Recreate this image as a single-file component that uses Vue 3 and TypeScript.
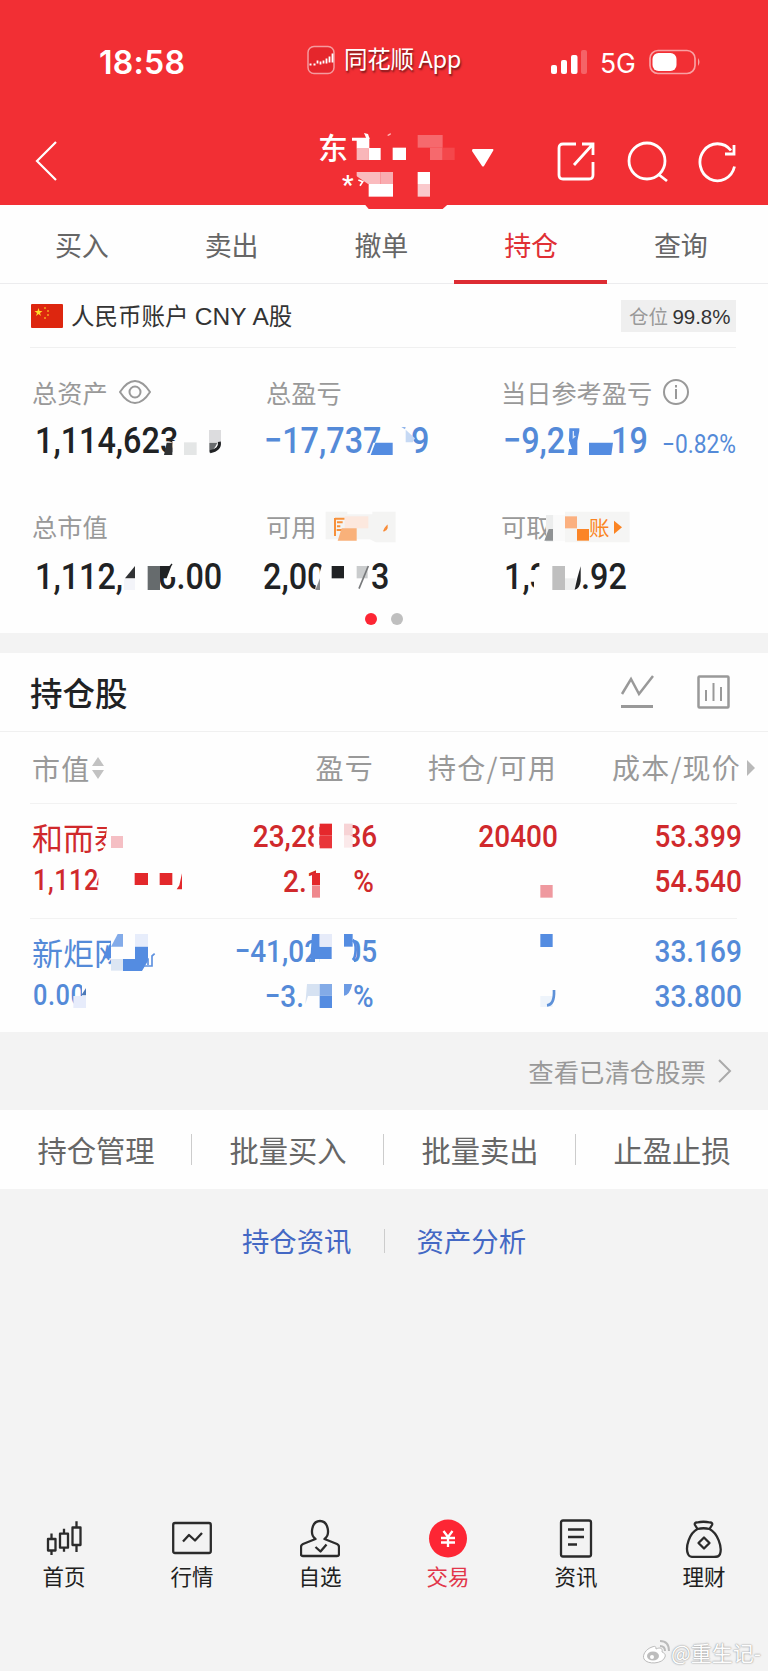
<script setup lang="ts">
interface Part { t: string; gap?: number }
interface Patch { p: string; c: string; w?: number }
interface Layer { x: number; y: number; items: Patch[] }

const tabs = ['买入', '卖出', '撤单', '持仓', '查询']
const actions = ['持仓管理', '批量买入', '批量卖出', '止盈止损']

const holdings: { tone: string; name: string; value: string; profit: Part[]; rate: Part[]; qty: string; cost: string; price: string }[] = [
  { tone: 'up', name: '和而泰', value: '1,112', profit: [{ t: '23,28' }, { t: '36', gap: 26 }], rate: [{ t: '2.1' }, { t: '%', gap: 35 }], qty: '20400', cost: '53.399', price: '54.540' },
  { tone: 'down', name: '新炬网', value: '0.00', profit: [{ t: '−41,02' }, { t: '05', gap: 29 }], rate: [{ t: '−3.' }, { t: '%', gap: 56 }], qty: '', cost: '33.169', price: '33.800' }
]

const bg = '#fefefe'
const red = '#e3282b'
const blue = '#548ce1'
const box = (x: number, y: number, w: number, h: number, c: string): Patch => ({ p: `M${x} ${y}h${w}v${h}h${-w}z`, c })
const shape = (p: string, c: string): Patch => ({ p, c })
const line = (p: string, c: string, w: number): Patch => ({ p, c, w })

// Mosaic tiles over private values; each layer is drawn on a grid of 1/3 px.
const layers: Layer[] = [
  { x: 290, y: 115, items: [
    shape('M186 68h52v32h-38V77h-14z', '#fff'), shape('M222 54l12 3 5 14-8 4z', '#fff'), shape('M292 60l10-6v5l-8 4z', '#fbb'),
    box(200, 99, 36, 36, '#f9b6b9'), box(236, 99, 36, 36, '#fff'), box(308, 98, 40, 37, '#fff'),
    box(383, 60, 75, 38, '#f6696d'), box(420, 98, 38, 37, '#f6696d'), box(458, 98, 36, 37, '#f4474b'),
    box(200, 171, 72, 36, '#fabbbe'), shape('M198 182v25h36z', '#f22f34'), box(272, 171, 37, 36, '#f9acb0'), box(236, 207, 73, 38, '#fff'),
    line('M205 195l13 5-8 12', '#fff', 5),
    box(383, 171, 37, 36, '#fff'), box(383, 207, 37, 38, '#fac9cc'),
    shape('M224 268h250l-16 14H236z', '#f22f34')
  ] },
  { x: 0, y: 365, items: [
    box(517, 228, 34, 50, bg), shape('M500 233h17v37h-25z', '#303234'), box(552, 232, 38, 38, '#e4e6e6'), box(627, 195, 36, 37, '#dcdcde'),
    shape('M628 233h24q-8 20-24 30z', '#696c6e'), line('M658 230q4 25-28 30', '#202224', 9),
    shape('M1120 233h60v40h-74z', bg), shape('M1126 233h52v37h-66z', blue),
    shape('M375 640l30-37v37z', '#303234'), box(372, 642, 33, 33, '#f3f4f9'), box(443, 603, 37, 72, '#666b6d'), box(480, 590, 52, 46, bg), shape('M480 603h34l-14 37h-20z', '#202224'), line('M500 617l16-20', '#202224', 4),
    shape('M970 585h20v95h-44v-12z', bg), shape('M960 640v35h-14z', '#8a8c8e'), box(995, 603, 37, 37, '#202224'), shape('M1070 590h38l-26 85h-12z', bg), box(1070, 603, 33, 37, '#cacccd'), line('M1105 603l-28 68', '#77797b', 5),
    shape('M977 440h65v8h75v-8h70v92h-60l-18-9H977z', '#f4f4f3'), line('M1005 461h29M1005 459v54M1011 472h17M1011 484h10M1010 495h16', '#f7903a', 6), box(1034, 454, 71, 36, '#fce8de'), shape('M1025 490h45v37h-57z', '#f9b17a'), line('M1151 499q2-8 10-16v6q-2 6-9 8z', '#f98a35', 4)
  ] },
  { x: 384, y: 365, items: [
    shape('M65 194l28 26-7 12H65z', '#c6d9f4'), shape('M52 186h13l-2 7z', '#8fb4eb'),
    box(550, 185, 47, 90, bg), shape('M556 190h30v8l-6 30v42h-28l3-18h9l-9-25z', blue), line('M568 198v20l6-5', '#dbe7fa', 4), shape('M615 233h72l-5 37h-67z', blue),
    shape('M486 450h22v80h-22z', '#eceded'), shape('M494 492h13v35h-26z', '#8f9294'), box(543, 440, 194, 92, '#f5f5f4'), box(508, 450, 35, 78, '#fafafa'), box(543, 454, 36, 36, '#fbb080'), box(579, 492, 36, 35, '#fb8527'),
    shape('M690 467l24 20-24 20z', '#fb8423'),
    box(466, 590, 40, 90, bg), shape('M450 622h18v60h-22l4-20z', bg), box(505, 603, 38, 72, '#bfbfbf'), box(543, 640, 32, 35, '#eeefef'), shape('M590 604v44q-2 22-18 26l8-35z', '#202224')
  ] },
  { x: 0, y: 800, items: [
    shape('M322 70h58v90h-78l18-30-2-20z', bg), box(333, 108, 36, 36, '#f5bfc4'), shape('M295 232v24h-6z', red), box(404, 219, 40, 36, red), box(479, 219, 38, 36, red), shape('M546 220v48h-16l8-12z', red),
    box(941, 65, 17, 85, bg), box(959, 71, 37, 36, '#e5282c'), box(959, 107, 37, 38, '#e9363a'), box(1032, 71, 26, 36, '#f7d3d5'), box(1032, 107, 26, 36, '#fbe9ea'),
    box(948, 205, 40, 80, bg), box(936, 255, 40, 30, bg), box(936, 219, 24, 36, '#e3282b'), box(936, 256, 24, 37, '#ef888d'),
    box(333, 410, 75, 105, bg), shape('M333 425l-25 50h25z', blue), shape('M369 402v38h-36l20-38z', '#83abe9'), box(405, 402, 39, 38, '#e7edfb'), box(333, 477, 36, 35, '#dce6f3'), shape('M405 440h39v42l-18 31h-57v-36h36z', blue), line('M432 498h24v-30l8-7M444 475v20', '#5e91df', 5),
    box(246, 545, 20, 75, bg), shape('M244 586l14-22v22z', '#4d79b9'), box(220, 588, 38, 36, '#e7ecfb'),
    box(945, 415, 14, 75, bg), shape('M936 402h23v38h36v37h-64z', blue), box(959, 402, 37, 38, '#e6ebf9'), box(1030, 410, 32, 80, bg), box(1032, 402, 26, 38, blue), line('M1058 420q10 6 9 30t-9 30', blue, 8),
    shape('M921 552h38v36h-35l-8 25z', '#d6e2f2'), box(959, 552, 37, 35, '#83abe7'), box(959, 587, 37, 37, blue), shape('M1032 552h25q-8 34-25 35z', '#6c9be4')
  ] },
  { x: 384, y: 800, items: [
    box(469, 255, 37, 38, '#ef999f'), box(469, 402, 37, 39, blue), box(469, 588, 37, 33, '#eef4fb'), line('M510 570q2 44-21 46', '#5e91d8', 8)
  ] }
]

const nav = [
  { label: '首页', icon: ['M7.500 14.500v5.500M4 20h7.500v11.500h-7.500zM7.500 31.500v4.500', 'M20 9.700v5M16 14.700h8v14h-8zM20 28.700v4', 'M32.500 2.300v6.200M28.500 8.500h8v17.500h-8zM32.500 26v7'] },
  { label: '行情', icon: ['M3 4h34q1.800 0 1.800 2v26q0 2-1.800 2H3q-1.800 0-1.800-2v-26q0-2 1.800-2z', 'M11 22.500l6-6.500 6 5.500 7-7.500'] },
  { label: '自选', icon: ['M15.500 20c-6-4-4-18 4.500-18s10.500 14 4.500 18l12.500 5q2 1 2 3v7q0 2-2 2H3q-2 0-2-2v-7q0-2 2-3z', 'M15.500 28l5 4.500 6-7'] },
  { label: '交易', icon: [] },
  { label: '资讯', icon: ['M7 1.500h26q2 0 2 2v32q0 2-2 2H7q-2 0-2-2V3.500q0-2 2-2z', 'M12 10.500h16M12 18h16M12 25.500h9'] },
  { label: '理财', icon: ['M13.500 10l-2.500-4q-1-2.500 2-2.500 6.500-1.500 13 0 3 0 2 2.500l-2.500 4', 'M13.500 10q6-1.500 12 0c8 4 13 18 10.500 25q-1 3-6 3H10q-5 0-6-3C1 28 5.500 14 13.500 10z', 'M20 18.500l5.500 5.500-5.500 5.500-5.500-5.500z'] }
]
</script>

<template>
  <div class="screen">
    <header class="top">
      <div class="status">
        <span class="clock">18:58</span>
        <div class="source">
          <svg width="28" height="30" viewBox="0 0 28 30"><rect x="1" y="1.500" width="26" height="27" rx="6" fill="#e5262c" stroke="#f59b9e" stroke-width="1.500" /><path d="M2.500 19.500h2m2 0h2m2-4v3m3-2v3m3-4v3m3-5v5m3-7v6m3-9v9" stroke="#fff" stroke-width="1.800" fill="none" /></svg>
          <span>同花顺 App</span>
        </div>
        <svg class="signal" width="38" height="26" viewBox="0 0 38 26"><g fill="#fff"><rect x="1" y="16" width="6" height="9" rx="2" /><rect x="11" y="11" width="6" height="14" rx="2" /><rect x="21" y="6" width="6.500" height="19" rx="2" /><rect x="31" y="1" width="6" height="24" rx="2" opacity=".25" /></g></svg>
        <span class="net">5G</span>
        <svg class="battery" width="54" height="28" viewBox="0 0 54 28"><rect x="2" y="2.500" width="45" height="23" rx="8" fill="none" stroke="#f9a0a2" stroke-width="1.700" /><rect x="4.500" y="5" width="24" height="18" rx="6" fill="#fff" /><path d="M50 10q3 4 0 8z" fill="#f9a0a2" /></svg>
      </div>
      <div class="bar">
        <svg class="back" width="24" height="42" viewBox="0 0 24 42" fill="none" stroke="#fff" stroke-width="2.200"><path d="M22 2L3 21l19 19" /></svg>
        <div class="title"><b>东</b><i>*</i></div>
        <svg class="caret" width="24" height="20" viewBox="0 0 24 20"><path d="M2 1h20q1 1 0 2L13 18q-1 1-2 0L1 3q0-2 1-2z" fill="#fff" /></svg>
        <svg class="tools" width="182" height="44" viewBox="0 0 182 44" fill="none" stroke="#fff" stroke-width="2.800"><path d="M20 4H7Q3 4 3 8v27q0 4 4 4h26q4 0 4-4V22M26 4h11v11M37 4L18 25" /><circle cx="91" cy="21" r="18" /><path d="M102 34l9 7M175 10.500a17.500 18.500 0 1 0 3.500 16M178 5v9h-9" /></svg>
      </div>
    </header>

    <nav class="tabs"><span v-for="t in tabs" :key="t" :class="{ active: t === '持仓' }">{{ t }}</span></nav>

    <section class="account">
      <div class="currency">
        <svg width="32" height="24" viewBox="0 0 32 24"><rect width="32" height="24" rx="1" fill="#dd260f" /><path d="M7.500 4l1 3h3L9 9l1 3-2.500-2L5 12l1-3-2.500-2h3z" fill="#ffdd2b" /><g fill="#f5a51f"><circle cx="14" cy="4" r="1" /><circle cx="17" cy="7" r="1" /><circle cx="17" cy="11" r="1" /><circle cx="14" cy="14" r="1" /></g></svg>
        <span>人民币账户 <em>CNY A</em>股</span>
        <div class="ratio">仓位 <em>99.8%</em></div>
      </div>
      <div class="grid">
        <div class="cell">
          <div class="label">总资产<svg class="eye" width="34" height="26" viewBox="0 0 34 26" fill="none" stroke="#999" stroke-width="2"><path d="M2 13Q9 2 17 2t15 11Q25 24 17 24T2 13z" /><circle cx="17" cy="13" r="5.500" /></svg></div>
          <div class="big"><span class="num">1,114,623</span></div>
        </div>
        <div class="cell">
          <div class="label">总盈亏</div>
          <div class="big down shift"><span class="num">−17,737</span><span class="num nine">9</span></div>
        </div>
        <div class="cell">
          <div class="label">当日参考盈亏<svg class="info" width="28" height="28" viewBox="0 0 28 28" fill="none" stroke="#999" stroke-width="2"><circle cx="14" cy="14" r="12" /><path d="M14 11v10M14 7v2.500" /></svg></div>
          <div class="big down"><span class="num">−9,2</span><span class="num nineteen">19</span><span class="num pct">−0.82%</span></div>
        </div>
        <div class="cell">
          <div class="label">总市值</div>
          <div class="big"><span class="num">1,112,</span><span class="num six">6.00</span></div>
        </div>
        <div class="cell">
          <div class="label">可用</div>
          <div class="big free"><span class="num">2,00</span><span class="num three">3</span></div>
        </div>
        <div class="cell">
          <div class="label">可取</div>
          <div class="big"><span class="num">1,3</span><span class="num cents">.92</span></div>
        </div>
      </div>
      <div class="dots"><i class="on"></i><i></i></div>
    </section>

    <section class="stocks">
      <div class="heading">
        <h2>持仓股</h2>
        <svg width="110" height="36" viewBox="0 0 110 36" fill="none" stroke="#999" stroke-width="2.500"><path d="M2 20L11 5l8 15L33 2" /><path d="M1 32.500h32" stroke-width="3" /><rect x="78.500" y="2.500" width="30" height="31" rx="1" /><path d="M86 16v11M93.500 9v18M101 13v14" stroke-width="2" /></svg>
      </div>
      <div class="row head">
        <span>市值<svg class="sort" width="14" height="24" viewBox="0 0 14 24" fill="#c2c2c2"><path d="M7 1l6 9H1zM7 23l6-9H1z" /></svg></span><span>盈亏</span><span>持仓/可用</span><span>成本/现价</span>
        <svg class="more" width="9" height="18" viewBox="0 0 9 18"><path d="M0 1l8 8-8 8z" fill="#b9b9b9" /></svg>
      </div>
      <div v-for="h in holdings" :key="h.name" class="row stock" :class="h.tone">
        <div><div class="name">{{ h.name }}</div><div class="line small"><span class="num">{{ h.value }}</span></div></div>
        <div>
          <div class="line"><span class="num"><span v-for="p in h.profit" :key="p.t" :style="{ marginLeft: (p.gap ?? 0) + 'px' }">{{ p.t }}</span></span></div>
          <div class="line rate"><span class="num"><span v-for="p in h.rate" :key="p.t" :style="{ marginLeft: (p.gap ?? 0) + 'px' }">{{ p.t }}</span></span></div>
        </div>
        <div><div class="line"><span class="num">{{ h.qty }}</span></div></div>
        <div><div class="line"><span class="num">{{ h.cost }}</span></div><div class="line"><span class="num">{{ h.price }}</span></div></div>
      </div>
    </section>

    <div class="cleared">查看已清仓股票<svg width="16" height="26" viewBox="0 0 16 26" fill="none" stroke="#aaa" stroke-width="2"><path d="M2 2l11 11L2 24" /></svg></div>
    <div class="actions"><span v-for="a in actions" :key="a">{{ a }}</span></div>
    <div class="links"><span>持仓资讯</span><span>资产分析</span></div>

    <footer class="nav">
      <div v-for="n in nav" :key="n.label" :class="{ active: n.label === '交易' }">
        <svg width="40" height="39" viewBox="0 0 40 39" fill="none" stroke="#2b2b2b" stroke-width="2.300" stroke-linejoin="round">
          <g v-if="n.label === '交易'"><circle cx="20" cy="19.500" r="19" fill="#fd2634" stroke="none" /><path d="M15.500 12l4.500 6 4.500-6M13 19h14M13 23.500h14M20 18v10" stroke="#fff" /></g>
          <path v-for="d in n.icon" :key="d" :d="d" />
        </svg>
        <span>{{ n.label }}</span>
      </div>
    </footer>

    <div class="watermark">
      <svg width="28" height="26" viewBox="0 0 28 26"><path d="M10 8C4 10 0 16 2 20c3 6 19 5 21-2 1-3-1-4-3-5 1-4-2-5-6-3 0-3-1-3-4-2z" fill="#fff" stroke="#bbb" /><ellipse cx="11" cy="17" rx="6" ry="4.500" fill="#bdbdbd" /><circle cx="10" cy="18" r="2" fill="#fff" /><path d="M18 7q5 0 5 5M18 2q9 0 9 10" fill="none" stroke="#bbb" stroke-width="2" /></svg>
      <span>@重生记-</span>
    </div>

    <svg class="mosaic" width="768" height="1671" viewBox="0 0 768 1671">
      <g v-for="(l, i) in layers" :key="i" :transform="`translate(${l.x} ${l.y}) scale(.33333)`">
        <path v-for="(s, j) in l.items" :key="j" :d="s.p" :fill="s.w ? 'none' : s.c" :stroke="s.w ? s.c : 'none'" :stroke-width="s.w ?? 0" />
      </g>
      <text x="589" y="535.500" class="tag">账</text>
    </svg>
  </div>
</template>

<style>
body { margin: 0; background: #f3f3f3; }
</style>

<style scoped>
.screen { position: relative; width: 768px; height: 1671px; overflow: hidden; background: #f3f3f3; color: #202224; font-family: "Noto Sans CJK SC", sans-serif; }
.screen * { box-sizing: border-box; }
svg { display: block; flex: none; }
em, i { font-style: normal; }
.top { height: 205px; background: #f22f34; color: #fff; }
.status { height: 124px; padding-left: 99px; display: flex; align-items: center; }
.clock { width: 208px; margin-top: 2px; font: 600 32px/40px Inter, sans-serif; letter-spacing: .300px; }
.source { width: 243px; display: flex; align-items: center; gap: 9px; margin-top: -5px; font-size: 23.500px; line-height: 34px; letter-spacing: -.300px; text-shadow: 1px 2px 2px #0008; }
.source span { margin-top: -4px; white-space: pre; }
.net { margin: 2px 0 0 12px; width: 48px; font: 400 26.500px/34px Inter, sans-serif; }
.bar { height: 81px; display: flex; }
.back { margin: 16px 0 0 34px; }
.title { width: 152px; margin: 4px 0 0 260px; height: 60px; }
.title b { display: block; font-weight: 500; font-size: 30px; line-height: 36px; }
.title i { display: block; margin: 3px 0 0 24px; font: 500 26px/36px Roboto, sans-serif; }
.caret { margin: 24px 0 0 1px; }
.tools { margin: 16px 0 0 61px; }
.tabs { height: 79px; padding-left: 7px; display: flex; background: #fefefe; border-bottom: 1px solid #ececee; }
.tabs span { position: relative; width: 149.750px; height: 79px; font-size: 27px; line-height: 80px; text-align: center; color: #666; }
.tabs .active { color: #e02f35; }
.tabs .active::after { content: ""; position: absolute; left: -2px; right: -1px; bottom: 0; height: 4px; background: #dd2c33; }
.account { height: 349px; background: #fefefe; }
.currency { margin: 0 32px 0 30px; height: 64px; padding-left: 1px; border-bottom: 1px solid #f0f0f0; display: flex; align-items: center; font-size: 23.500px; line-height: 34px; color: #333; word-spacing: 1px; }
.currency > svg { margin-right: 8px; }
.currency em, .ratio em { font-family: "Liberation Sans", sans-serif; }
.currency > span em { font-size: 24.500px; }
.ratio { margin-left: auto; width: 115px; height: 32px; line-height: 31px; padding-left: 8px; background: #efefef; color: #999; font-size: 19.500px; word-spacing: 0; white-space: nowrap; }
.ratio em { color: #333; font-size: 20.500px; }
.grid { display: grid; grid-template-columns: 234px 235px 1fr; grid-template-rows: 134px 122px; padding: 26px 0 0 32px; height: 256px; }
.label { height: 36px; display: flex; align-items: center; font-size: 25.200px; line-height: 36px; color: #999; }
.eye { margin-left: 10px; }
.info { margin-left: 10px; }
.big { height: 52px; padding-left: 3px; display: flex; align-items: center; font-size: 37px; line-height: 52px; white-space: nowrap; margin-top: 5px; }
.cell:nth-child(n+4) .big { margin-top: 7px; }
.num { display: inline-block; font-family: Roboto, sans-serif; font-weight: 500; letter-spacing: 0; transform: scaleX(.875); transform-origin: left; }
.big.down { padding-left: 2px; }
.big.shift { margin-left: -4px; }
.big.free { margin-left: -6px; }
.nine { margin-left: 13px; }
.nineteen { margin-left: 37px; }
.pct { margin: 6px 0 0 9px; font-size: 26px; font-weight: 400; }
.six { margin-left: 22px; }
.three { margin-left: 37px; }
.cents { margin-left: 27px; }
.dots { display: flex; gap: 14px; padding: 9px 0 0 365px; }
.dots i { width: 12px; height: 12px; border-radius: 50%; background: #bfbfbf; }
.dots .on { background: #fd2634; }
.stocks { margin-top: 20px; height: 379px; background: #fefefe; }
.heading { height: 79px; padding: 0 38px 0 30px; display: flex; align-items: center; justify-content: space-between; border-bottom: 1px solid #f0f0f0; }
.heading h2 { margin: 0; font-size: 32.500px; line-height: 44px; font-weight: 500; }
.row { position: relative; margin-left: 30px; width: 712px; padding-left: 2px; display: grid; grid-template-columns: 179px 163px 181px 184px; }
.row > * { text-align: right; }
.row > :first-child { text-align: left; }
.row::after { content: ""; position: absolute; left: 0; right: 5px; bottom: 0; height: 1px; background: #f2f2f2; }
.head { height: 72px; color: #999; font-size: 28px; line-height: 70px; letter-spacing: 1.200px; }
.head span:nth-child(3), .head span:nth-child(4) { margin-right: -2px; }
.head span:first-child { display: flex; align-items: center; gap: 1px; }
.more { position: absolute; left: 717px; top: 27px; }
.stock { height: 115px; padding-top: 8px; }
.stock:last-child::after { display: none; }
.stock .num { transform-origin: right; }
.stock > :first-child .num { transform-origin: left; }
.name { font-size: 31px; line-height: 50px; height: 45px; }
.line { margin-right: -3px; height: 45px; line-height: 43px; font-size: 32px; white-space: nowrap; }
.rate { margin-right: 0; }
.small { font-size: 29px; padding-left: 1px; line-height: 41px; }
.small .num { letter-spacing: .600px; }
.up { color: #d0292c; }
.down { color: #548ad8; }
.cleared { height: 78px; display: flex; align-items: center; justify-content: flex-end; gap: 11px; padding-right: 35px; font-size: 25.400px; line-height: 38px; color: #999; }
.actions { height: 79px; display: flex; background: #fefefe; }
.actions span { position: relative; width: 192px; text-align: center; font-size: 29.300px; line-height: 79px; color: #666; }
.actions span + span::before { content: ""; position: absolute; left: -1px; top: 24px; width: 1px; height: 31px; background: #ccc; }
.links { height: 104px; display: flex; justify-content: center; font-size: 27.400px; line-height: 102px; color: #4468c4; }
.links span + span { position: relative; margin-left: 65px; }
.links span + span::before { content: ""; position: absolute; left: -33px; top: 40px; width: 1px; height: 24px; background: #ccc; }
.nav { margin-top: 226px; display: flex; }
.nav div { width: 128px; display: flex; flex-direction: column; align-items: center; color: #202020; font-size: 21.500px; line-height: 34px; }
.nav svg { margin-bottom: 1px; }
.nav .active { color: #e2364a; }
.watermark { position: absolute; left: 642px; top: 1638px; display: flex; align-items: center; gap: 1px; color: #fdfdfd; font-size: 21px; line-height: 28px; text-shadow: 0 0 2px #999, 0 0 1px #999; white-space: nowrap; }
.mosaic { position: absolute; left: 0; top: 0; }
.tag { font-size: 20.500px; fill: #fb8423; }
</style>
